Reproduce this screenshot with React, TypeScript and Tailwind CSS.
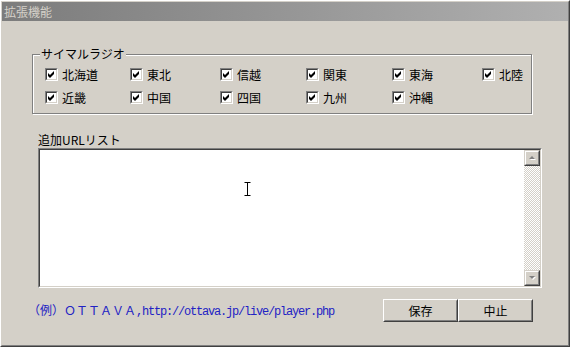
import React from 'react';

const font = { fontFamily: '"Noto Sans CJK JP", "Noto Sans", sans-serif' };

const regions = [
  ['北海道', '東北', '信越', '関東', '東海', '北陸'],
  ['近畿', '中国', '四国', '九州', '沖縄'],
];

const CheckBox = ({ label }: { label: string }) => (
  <div className="flex items-center gap-[4px] h-[13px]">
    <div className="w-[13px] h-[13px] border border-t-[#808080] border-l-[#808080] border-r-white border-b-white shrink-0">
      <div className="w-full h-full border border-t-[#404040] border-l-[#404040] border-r-[#d4d0c8] border-b-[#d4d0c8] bg-white flex items-center justify-center">
        <svg width="7" height="7" viewBox="0 0 7 7">
          <path d="M0 2 L2 4 L6 0 L6 3 L2 7 L0 5 Z" fill="#000" />
        </svg>
      </div>
    </div>
    <span className="text-[12px] leading-[14px] text-black whitespace-nowrap">{label}</span>
  </div>
);

const ScrollButton = ({ up }: { up?: boolean }) => (
  <div className="w-[16px] h-[16px] bg-[#d4d0c8] border border-t-[#d4d0c8] border-l-[#d4d0c8] border-r-[#404040] border-b-[#404040] shrink-0">
    <div className="w-full h-full border border-t-white border-l-white border-r-[#808080] border-b-[#808080] flex items-center justify-center">
      <svg width="9" height="6" viewBox="0 0 9 6">
        {up ? (
          <>
            <path d="M2 5 L5 2 L8 5 Z" fill="#fff" />
            <path d="M1 4 L4 1 L7 4 Z" fill="#808080" />
          </>
        ) : (
          <>
            <path d="M2 2 L8 2 L5 5 Z" fill="#fff" />
            <path d="M1 1 L7 1 L4 4 Z" fill="#808080" />
          </>
        )}
      </svg>
    </div>
  </div>
);

const Button = ({ label }: { label: string }) => (
  <button className="w-[75px] h-[23px] bg-[#d4d0c8] border border-t-white border-l-white border-r-[#404040] border-b-[#404040]">
    <div className="w-full h-full border border-t-[#d4d0c8] border-l-[#d4d0c8] border-r-[#808080] border-b-[#808080] flex items-center justify-center text-[12px] text-black">
      {label}
    </div>
  </button>
);

export default function App() {
  return (
    <div
      className="w-[570px] h-[347px] bg-[#d4d0c8] border border-t-white border-l-white border-r-[#404040] border-b-[#404040] relative overflow-hidden"
      style={font}
    >
      <div className="h-full border border-t-[#d4d0c8] border-l-[#d4d0c8] border-r-[#808080] border-b-[#808080]">
        {/* Title bar */}
        <div className="h-[19px] bg-gradient-to-r from-[#7c7c7c] to-[#b0b0b0] flex items-center px-[2px]">
          <span className="text-[12px] leading-[14px] text-[#d4d0c8]">拡張機能</span>
        </div>

        {/* Simul radio group */}
        <div className="pl-[30px] pt-[33px]">
          <div className="relative w-[500px] h-[60px] border border-[#808080] shadow-[inset_1px_1px_0_#fff,1px_1px_0_#fff] pt-[13px] pl-[12px]">
            <span className="absolute -top-[8px] left-[7px] px-[1px] bg-[#d4d0c8] text-[12px] leading-[14px] text-black">
              サイマルラジオ
            </span>
            <div className="grid grid-cols-[85px_90px_86px_86px_90px_auto] gap-y-[10px]">
              {regions.flat().map((r) => (
                <CheckBox key={r} label={r} />
              ))}
            </div>
          </div>
        </div>

        {/* URL list */}
        <div className="pl-[36px] pt-[19px]">
          <div className="text-[12px] leading-[14px] text-black">追加URLリスト</div>
          <div className="mt-[1px] w-[504px] h-[140px] border border-t-[#808080] border-l-[#808080] border-r-white border-b-white">
            <div className="w-full h-full border border-t-[#404040] border-l-[#404040] border-r-[#d4d0c8] border-b-[#d4d0c8] flex bg-white">
              <div className="flex-1 relative">
                <svg className="absolute left-[203px] top-[31px]" width="9" height="16" viewBox="0 0 9 16">
                  <path d="M1 1 H8 M4.5 1 V15 M1 15 H8" stroke="#fff" strokeWidth="3" />
                  <path d="M1.5 1.5 H7.5 M4.5 1.5 V14.5 M1.5 14.5 H7.5" stroke="#000" strokeWidth="1" />
                </svg>
              </div>
              <div className="w-[16px] flex flex-col">
                <ScrollButton up />
                <div className="flex-1 bg-[repeating-conic-gradient(#d4d0c8_0_25%,#fff_0_50%)] bg-[length:2px_2px]" />
                <ScrollButton />
              </div>
            </div>
          </div>
        </div>

        {/* Footer */}
        <div className="flex items-center pl-[26px] pt-[11px] w-[531px]">
          <div className="text-[#2222c4] text-[12px] leading-[14px] whitespace-nowrap">
            <span>（例）ＯＴＴＡＶＡ</span>
            <span className="font-['Liberation_Mono',monospace] tracking-[-1.2px]">,http://ottava.jp/live/player.php</span>
          </div>
          <div className="ml-auto flex">
            <Button label="保存" />
            <Button label="中止" />
          </div>
        </div>
      </div>
    </div>
  );
}
